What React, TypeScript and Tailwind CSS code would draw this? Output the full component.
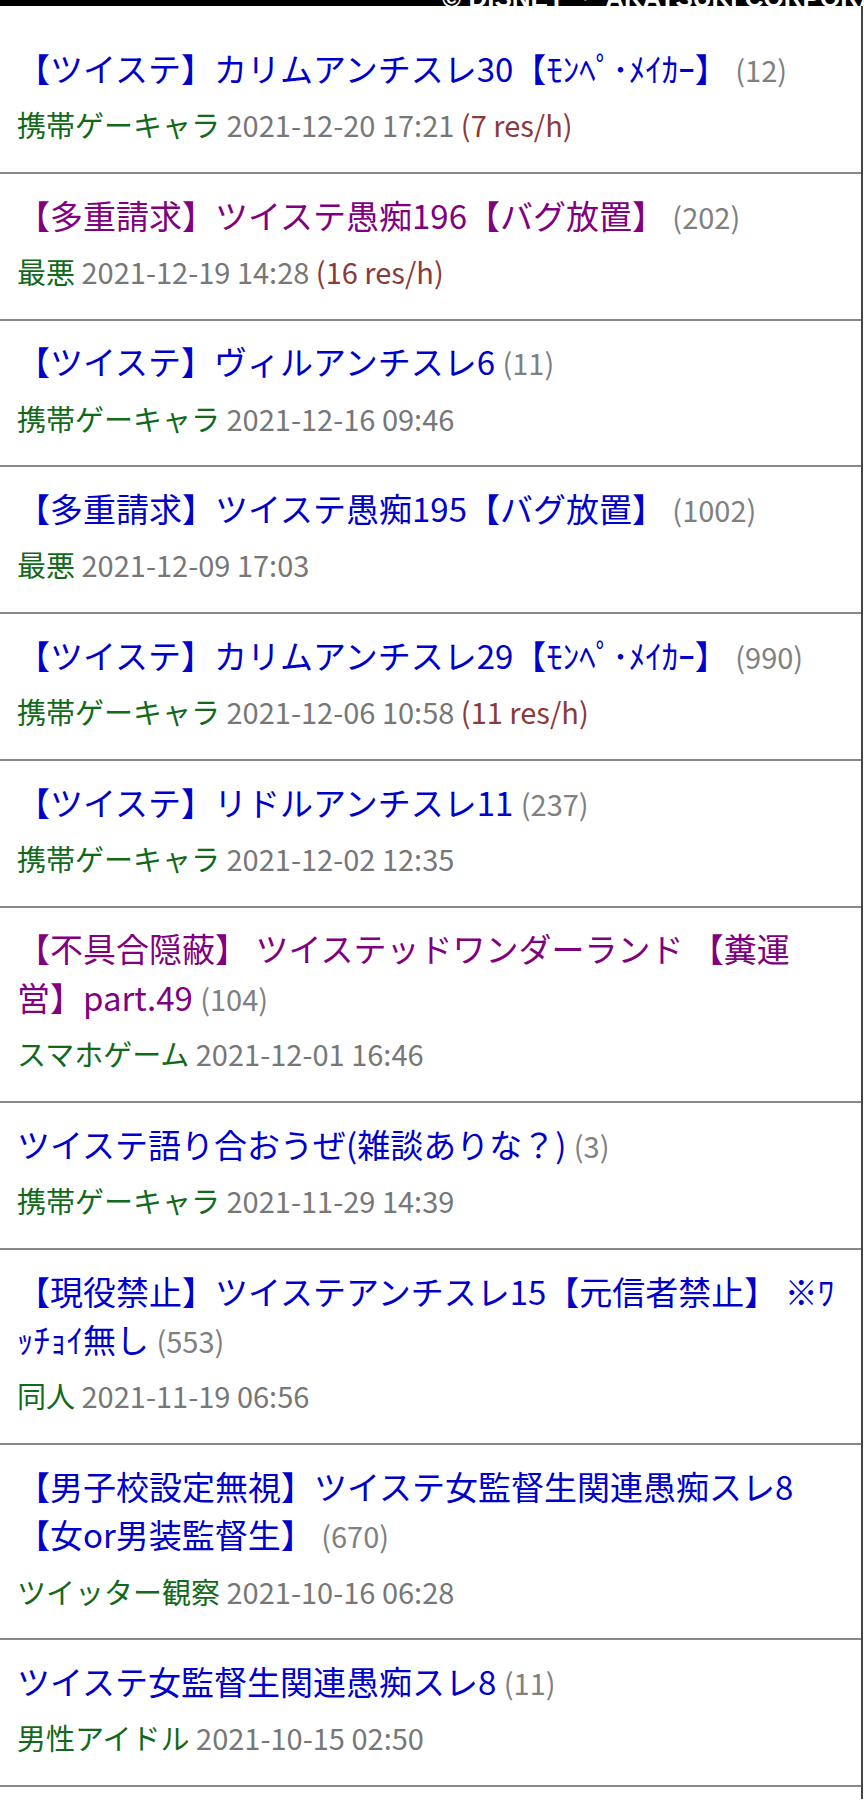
type Thread = {
  title: string;
  count: number;
  visited?: boolean;
  board: string;
  date: string;
  speed?: string;
};

const threads: Thread[] = [
  { title: '【ツイステ】カリムアンチスレ30【ﾓﾝﾍﾟ･ﾒｲｶｰ】 ', count: 12, board: '携帯ゲーキャラ', date: '2021-12-20 17:21', speed: '7 res/h' },
  { title: '【多重請求】ツイステ愚痴196【バグ放置】 ', count: 202, visited: true, board: '最悪', date: '2021-12-19 14:28', speed: '16 res/h' },
  { title: '【ツイステ】ヴィルアンチスレ6', count: 11, board: '携帯ゲーキャラ', date: '2021-12-16 09:46' },
  { title: '【多重請求】ツイステ愚痴195【バグ放置】 ', count: 1002, board: '最悪', date: '2021-12-09 17:03' },
  { title: '【ツイステ】カリムアンチスレ29【ﾓﾝﾍﾟ･ﾒｲｶｰ】 ', count: 990, board: '携帯ゲーキャラ', date: '2021-12-06 10:58', speed: '11 res/h' },
  { title: '【ツイステ】リドルアンチスレ11', count: 237, board: '携帯ゲーキャラ', date: '2021-12-02 12:35' },
  { title: '【不具合隠蔽】 ツイステッドワンダーランド 【糞運営】part.49', count: 104, visited: true, board: 'スマホゲーム', date: '2021-12-01 16:46' },
  { title: 'ツイステ語り合おうぜ(雑談ありな？)', count: 3, board: '携帯ゲーキャラ', date: '2021-11-29 14:39' },
  { title: '【現役禁止】ツイステアンチスレ15【元信者禁止】 ※ﾜｯﾁｮｲ無し', count: 553, board: '同人', date: '2021-11-19 06:56' },
  { title: '【男子校設定無視】ツイステ女監督生関連愚痴スレ8【女or男装監督生】 ', count: 670, board: 'ツイッター観察', date: '2021-10-16 06:28' },
  { title: 'ツイステ女監督生関連愚痴スレ8', count: 11, board: '男性アイドル', date: '2021-10-15 02:50' },
];

export default function App() {
  return (
    <div className="w-[864px] bg-white font-['Noto_Sans_CJK_JP','Noto_Sans',sans-serif] [text-spacing-trim:space-all]">
      {/* bottom edge of the header image */}
      <div className="h-[6px] overflow-hidden bg-black flex items-end pl-[442px]">
        <span className="whitespace-nowrap text-white font-bold text-[26px] leading-[26px] -mb-[5px] font-['Liberation_Sans',sans-serif]">
          © DISNEY ・ AKATSUKI CORPORATION
        </span>
      </div>

      <div className="w-[863px] border-r-2 border-[#444] pt-[21px]">
        <ul>
          {threads.map((t) => (
            <li
              key={t.title}
              className="border-b-2 border-[#888] pt-[16.8px] pb-[26.2px] pl-[17px] pr-[16px]"
            >
              <div className="text-[33px] leading-[48.6px]">
                <a href="#" className={t.visited ? 'text-[#800080]' : 'text-[#0000cc]'}>
                  {t.title}
                </a>{' '}
                <span className="text-[29px] leading-[1] text-[#808080]">({t.count})</span>
              </div>
              <div className="mt-[10.6px] text-[29px] leading-[42.6px]">
                <span className="text-[#11691a]">{t.board}</span>{' '}
                <span className="text-[#777]">{t.date}</span>
                {t.speed && (
                  <>
                    {' '}
                    <span className="text-[#8b3a3a]">({t.speed})</span>
                  </>
                )}
              </div>
            </li>
          ))}
        </ul>
        <div className="h-[12px]" />
      </div>
    </div>
  );
}
